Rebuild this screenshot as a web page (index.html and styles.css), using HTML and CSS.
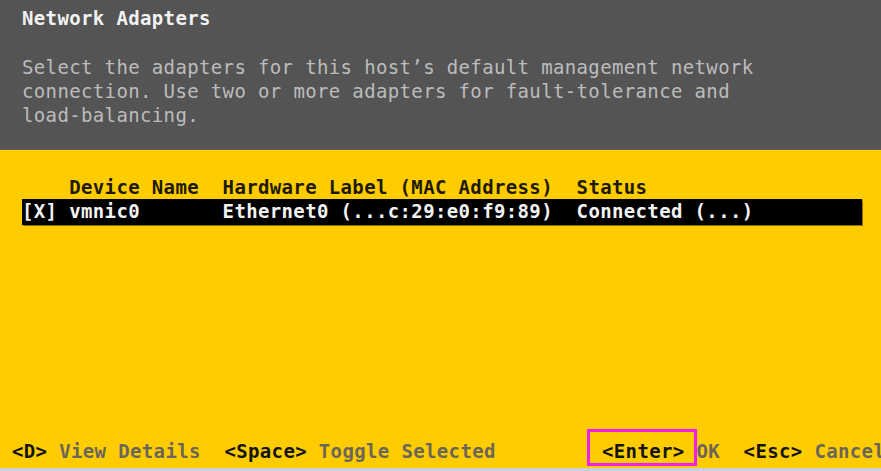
FILE: index.html
```
<!DOCTYPE html>
<html lang="en">
<head>
<meta charset="utf-8">
<title>Network Adapters</title>
<link rel="stylesheet" href="styles.css">
</head>
<body>
<div class="screen">
  <header class="top">
    <h1 class="title">Network Adapters</h1>
    <p class="desc">Select the adapters for this host’s default management network
connection. Use two or more adapters for fault-tolerance and
load-balancing.</p>
  </header>
  <main class="main">
    <div class="table">
      <div class="row head">
        <span class="cell"></span>
        <span class="cell">Device Name</span>
        <span class="cell">Hardware Label (MAC Address)</span>
        <span class="cell">Status</span>
      </div>
      <div class="row selected">
        <span class="cell">[X]</span>
        <span class="cell">vmnic0</span>
        <span class="cell">Ethernet0 (...c:29:e0:f9:89)</span>
        <span class="cell">Connected (...)</span>
      </div>
    </div>
    <footer class="footer">
      <span class="item"><span class="key">&lt;D&gt;</span> <span class="label">View Details</span></span>
      <span class="item"><span class="key">&lt;Space&gt;</span> <span class="label">Toggle Selected</span></span>
      <span class="item enter"><span class="key highlight">&lt;Enter&gt;</span> <span class="label">OK</span></span>
      <span class="item"><span class="key">&lt;Esc&gt;</span> <span class="label">Cancel</span></span>
    </footer>
  </main>
  <div class="strip"></div>
</div>
</body>
</html>
```
FILE: styles.css
```
:root {
  --cw: 11.8px;
}
* { box-sizing: border-box; }
html, body {
  margin: 0;
  padding: 0;
}
body {
  width: 881px;
  height: 471px;
  overflow: hidden;
  background: #ffcc00;
  font-family: "DejaVu Sans Mono", "Liberation Mono", monospace;
  font-size: 19px;
  letter-spacing: 0.36px;
  line-height: 24px;
}
.screen {
  width: 881px;
  height: 471px;
  display: flex;
  flex-direction: column;
  overflow: hidden;
}
.top {
  height: 150px;
  flex: none;
  background: #545454;
  border-bottom: 1px solid #5e5a6c;
  padding: 6px 0 0 22px;
}
.title {
  margin: 0;
  font-size: inherit;
  font-weight: bold;
  color: #f2f2f2;
  line-height: 24px;
}
.desc {
  margin: 25px 0 0;
  white-space: pre;
  color: #bcbcbc;
}
.main {
  flex: 1;
  display: flex;
  flex-direction: column;
  background: #ffcc00;
  padding: 25px 0 5px 0;
  min-height: 0;
}
.table {
  margin-left: 22px;
  width: 840px;
}
.row {
  display: grid;
  grid-template-columns: calc(4 * var(--cw)) calc(13 * var(--cw)) calc(30 * var(--cw)) 1fr;
  white-space: pre;
  font-weight: bold;
}
.row.head {
  color: #1e1a00;
}
.row.selected {
  background: #000;
  color: #f2f2f2;
  padding-bottom: 2px;
  box-shadow: 0 0 1px 0.5px rgba(60, 50, 0, 0.6);
}
.footer {
  margin-top: auto;
  margin-left: 12px;
  display: flex;
  gap: calc(2 * var(--cw));
  white-space: pre;
  font-weight: bold;
}
.item { flex: none; }
.item.enter { margin-left: calc(7 * var(--cw)); }
.key { color: #141414; }
.label { color: #6b6658; }
.highlight {
  position: relative;
}
.highlight::before {
  content: "";
  position: absolute;
  left: -15px;
  right: -12px;
  top: -11px;
  bottom: -4px;
  border: 3px solid #f01ff0;
}
.strip {
  height: 3px;
  flex: none;
  background: #c8d0e2;
}
```
